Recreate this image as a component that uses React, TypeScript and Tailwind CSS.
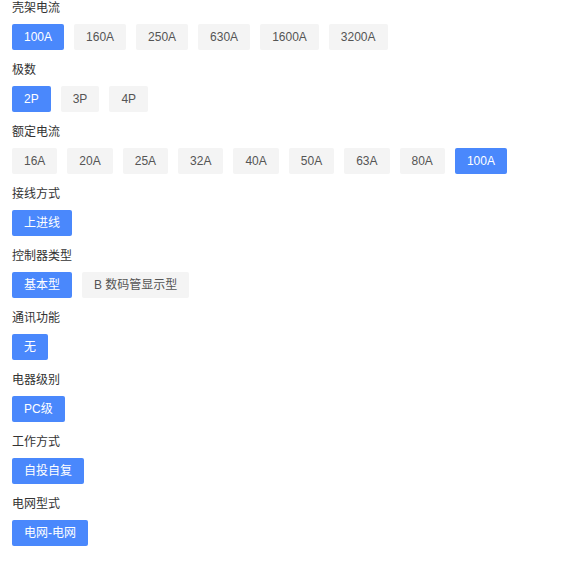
import React from "react";

type Group = { label: string; options: string[]; active: string };

const groups: Group[] = [
  { label: "壳架电流", options: ["100A", "160A", "250A", "630A", "1600A", "3200A"], active: "100A" },
  { label: "极数", options: ["2P", "3P", "4P"], active: "2P" },
  { label: "额定电流", options: ["16A", "20A", "25A", "32A", "40A", "50A", "63A", "80A", "100A"], active: "100A" },
  { label: "接线方式", options: ["上进线"], active: "上进线" },
  { label: "控制器类型", options: ["基本型", "B 数码管显示型"], active: "基本型" },
  { label: "通讯功能", options: ["无"], active: "无" },
  { label: "电器级别", options: ["PC级"], active: "PC级" },
  { label: "工作方式", options: ["自投自复"], active: "自投自复" },
  { label: "电网型式", options: ["电网-电网"], active: "电网-电网" },
];

export default function App() {
  return (
    <div
      className="w-[570px] h-[570px] bg-white px-3 overflow-hidden"
      style={{ fontFamily: '"Liberation Sans", "Noto Sans CJK SC", sans-serif' }}
    >
      {groups.map((g) => (
        <div key={g.label} className="mb-3">
          <div className="text-[12px] leading-[16px] text-[#333333] mb-2">{g.label}</div>
          <div className="flex flex-wrap gap-[10px]">
            {g.options.map((o) => {
              const on = o === g.active;
              return (
                <div
                  key={o}
                  className={
                    on
                      ? "h-[26px] px-3 flex items-center rounded-[2px] bg-[#4a88fc] text-white text-[12px] whitespace-nowrap"
                      : "h-[26px] px-3 flex items-center rounded-[2px] bg-[#f4f4f4] text-[#555555] text-[12px] whitespace-nowrap"
                  }
                >
                  {o}
                </div>
              );
            })}
          </div>
        </div>
      ))}
    </div>
  );
}
